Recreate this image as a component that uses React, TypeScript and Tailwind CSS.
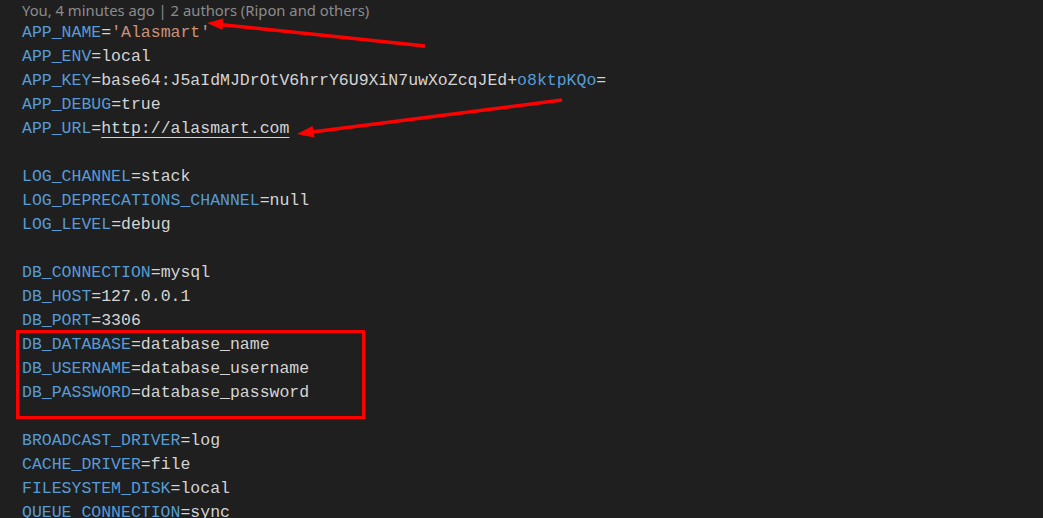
import React from "react";

type Line = { k?: string; v?: string; str?: boolean; url?: boolean; key64?: boolean };

const lines: Line[] = [
  { k: "APP_NAME", v: "'Alasmart'", str: true },
  { k: "APP_ENV", v: "local" },
  { k: "APP_KEY", key64: true },
  { k: "APP_DEBUG", v: "true" },
  { k: "APP_URL", v: "http://alasmart.com", url: true },
  {},
  { k: "LOG_CHANNEL", v: "stack" },
  { k: "LOG_DEPRECATIONS_CHANNEL", v: "null" },
  { k: "LOG_LEVEL", v: "debug" },
  {},
  { k: "DB_CONNECTION", v: "mysql" },
  { k: "DB_HOST", v: "127.0.0.1" },
  { k: "DB_PORT", v: "3306" },
  { k: "DB_DATABASE", v: "database_name" },
  { k: "DB_USERNAME", v: "database_username" },
  { k: "DB_PASSWORD", v: "database_password" },
  {},
  { k: "BROADCAST_DRIVER", v: "log" },
  { k: "CACHE_DRIVER", v: "file" },
  { k: "FILESYSTEM_DISK", v: "local" },
  { k: "QUEUE_CONNECTION", v: "sync" },
];

export default function App() {
  return (
    <div className="relative w-[1043px] h-[518px] overflow-hidden bg-[#1f1f1f]">
      <div className="h-[21px] pl-[22px] pb-[1px] flex items-center text-[14.8px] leading-[19px] text-[#8c8c8c] font-['Noto_Sans',sans-serif] whitespace-pre">
        You, 4 minutes ago | 2 authors (Ripon and others)
      </div>
      <div className="pl-[22px] font-['Liberation_Mono',monospace] text-[16.5px] leading-[24px] whitespace-pre">
        {lines.map((l, i) => (
          <div key={i} className="h-[24px]">
            {l.k && <span className="text-[#569cd6]">{l.k}</span>}
            {l.k && <span className="text-[#d4d4d4]">=</span>}
            {l.key64 ? (
              <>
                <span className="text-[#d4d4d4]">base64:J5aIdMJDrOtV6hrrY6U9XiN7uwXoZcqJEd+</span>
                <span className="text-[#569cd6]">o8ktpKQo</span>
                <span className="text-[#d4d4d4]">=</span>
              </>
            ) : l.str ? (
              <span className="text-[#ce9178]">{l.v}</span>
            ) : l.url ? (
              <span className="text-[#d4d4d4] underline decoration-[#d4d4d4] underline-offset-[4px]">{l.v}</span>
            ) : (
              l.v && <span className="text-[#d4d4d4]">{l.v}</span>
            )}
          </div>
        ))}
      </div>
      <div className="absolute left-[16px] top-[330px] w-[349px] h-[89px] border-[3px] border-[#ff0000]" />
      <svg className="absolute left-0 top-0 pointer-events-none" width="1043" height="518">
        <line x1="425" y1="46" x2="220" y2="24.5" stroke="#ff0000" strokeWidth="3.5" />
        <polygon points="207,23 223.5,18.5 222.5,30" fill="#ff0000" />
        <line x1="562" y1="100" x2="312" y2="132" stroke="#ff0000" strokeWidth="3.5" />
        <polygon points="297,134 312.5,126 314.5,137.5" fill="#ff0000" />
      </svg>
    </div>
  );
}
